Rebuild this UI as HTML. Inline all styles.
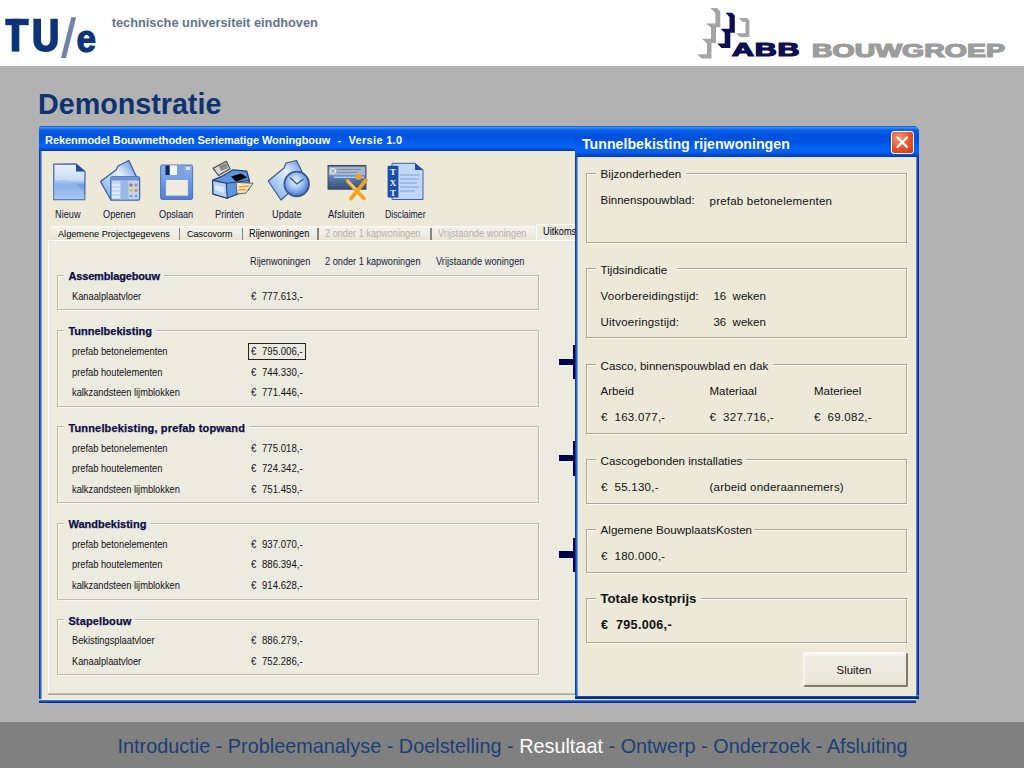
<!DOCTYPE html>
<html><head><meta charset="utf-8"><style>
html,body{margin:0;padding:0}
body{width:1024px;height:768px;position:relative;overflow:hidden;background:#b2b2b2;font-family:"Liberation Sans",sans-serif}
.t{position:absolute;white-space:nowrap;line-height:1}
.r{position:absolute}
</style></head><body>
<div class="r" style="left:0px;top:0px;width:1024px;height:66px;background:#fff"></div>
<div class="r" style="left:0px;top:722px;width:1024px;height:46px;background:#808080"></div>
<svg class="r" style="left:0;top:0" width="110" height="66" viewBox="0 0 110 66">
<g fill="#0b3479">
<rect x="5.3" y="18.8" width="23.4" height="6.4"/>
<rect x="11.7" y="18.8" width="7.6" height="32.8"/>
<path d="M33.4 18.8h7.6v20.5c0 4.5 2 6.3 4.7 6.3s4.7-1.8 4.7-6.3V18.8h7.4v21c0 8.5-5 12.2-12.1 12.2S33.4 48.3 33.4 39.8z"/>
</g>
<path d="M61 58 L66 58 L76.2 17.3 L71.2 17.3 Z" fill="#6f84a6"/>
<text x="0" y="0" font-family="Liberation Sans" font-weight="bold" font-size="39" fill="#0b3479" stroke="#0b3479" stroke-width="1.2" transform="translate(76.6 51.6) scale(0.9 1)">e</text>
</svg>
<div class="t" style="left:111.7px;top:16.60px;font-size:12.8px;font-weight:bold;color:#627490;">technische universiteit eindhoven</div>
<svg class="r" style="left:690px;top:0" width="80" height="66" viewBox="690 0 80 66">
<g fill="#a4a4a4">
<path d="M710.4 8.1 L717 8.1 L720.3 11.4 L720.3 27.2 L716 27.2 L716 42.9 L711.5 42.9 L711.5 58.5 L701.6 58.5 L697.2 54.2 L707 54.2 L707 43 L706.4 43 L702 38.8 L711 38.8 L711 27.6 L705.7 23.4 L715.4 23.4 L715.4 13.1 Z"/>
<path d="M738.8 18 L747 18 L749.4 20.4 L749.4 37 L740 37 L736.2 33.2 L745.5 33.2 L745.5 21.7 L742.5 21.7 Z"/>
</g>
<g fill="#0e0e52">
<path d="M725.4 12.8 L732 12.8 L734.8 15.6 L734.8 32.8 L730.3 32.8 L730.3 48 L721.5 48 L717.3 43.6 L724.7 43.6 L724.7 32.8 L720.6 28.8 L729.5 28.8 L729.5 16.9 Z"/>
</g>
</svg>
<div class="t" style="left:731.8px;top:41.40px;font-size:18.2px;font-weight:bold;color:#0e0e52;transform:scaleX(1.67);transform-origin:0 0;letter-spacing:0.5px;-webkit-text-stroke:1.2px #0e0e52;">ABB</div>
<div class="t" style="left:812px;top:42.40px;font-size:18.2px;font-weight:bold;color:#9c9c9c;transform:scaleX(1.565);transform-origin:0 0;-webkit-text-stroke:1.2px #9c9c9c;">BOUWGROEP</div>
<div class="t" style="left:38px;top:90.15px;font-size:28.7px;font-weight:bold;color:#0d3370;">Demonstratie</div>
<div class="t" style="left:117.5px;top:736.60px;font-size:19.8px;font-weight:normal;color:#1b3f74;letter-spacing:0.03px;">Introductie - Probleemanalyse - Doelstelling - <span style="color:#fff">Resultaat</span> - Ontwerp - Onderzoek - Afsluiting</div>
<div class="r" style="left:39px;top:126px;width:877px;height:577px;background:#1a3a9a;border-radius:3px 3px 0 0"></div>
<div class="r" style="left:39px;top:126px;width:877px;height:25px;background:linear-gradient(#1a4cb8 0px,#3a92ff 1.5px,#0a5ce6 4px,#0052dc 9px,#0056e2 13px,#0064f8 19px,#0a5ae8 22px,#0a3aa8 24.5px);border-radius:3px 3px 0 0"></div>
<div class="r" style="left:39px;top:151px;width:1px;height:552px;background:#1c3a96"></div>
<div class="r" style="left:40px;top:151px;width:1px;height:552px;background:#2a62c8"></div>
<div class="r" style="left:41px;top:151px;width:1px;height:552px;background:#6aa2e6"></div>
<div class="r" style="left:39px;top:699px;width:877px;height:1px;background:#e4eef8"></div>
<div class="r" style="left:39px;top:700px;width:877px;height:1px;background:#3a74d0"></div>
<div class="r" style="left:39px;top:701px;width:877px;height:1px;background:#1f48b0"></div>
<div class="r" style="left:39px;top:702px;width:877px;height:1px;background:#0c2a8a"></div>
<div class="r" style="left:42px;top:151px;width:874px;height:548px;background:#ece9d8"></div>
<div class="r" style="left:42px;top:151px;width:874px;height:1px;background:#e4ecf4"></div>
<div class="t" style="left:45.1px;top:135.00px;font-size:11px;font-weight:bold;color:#fff;letter-spacing:-0.07px;">Rekenmodel Bouwmethoden Seriematige Woningbouw</div>
<div class="t" style="left:348.6px;top:135.00px;font-size:11px;font-weight:bold;color:#fff;letter-spacing:0.3px;">Versie 1.0</div>
<div class="t" style="left:337.6px;top:135.00px;font-size:11px;font-weight:bold;color:#fff;">-</div>
<svg class="r" style="left:0;top:0" width="440" height="210" viewBox="0 0 440 210">
<defs>
<linearGradient id="gDoc" x1="0" y1="0" x2="0" y2="1"><stop offset="0" stop-color="#e8f0fc"/><stop offset="0.45" stop-color="#c9dcf7"/><stop offset="0.6" stop-color="#6e9be0"/><stop offset="1" stop-color="#bcd3f5"/></linearGradient>
<linearGradient id="gBlue" x1="0" y1="1" x2="1" y2="0"><stop offset="0" stop-color="#6e9ee6"/><stop offset="0.45" stop-color="#c4dcf8"/><stop offset="0.6" stop-color="#e4effc"/><stop offset="1" stop-color="#4f83d6"/></linearGradient>
<linearGradient id="gFlop" x1="0" y1="0" x2="0" y2="1"><stop offset="0" stop-color="#8fb4ee"/><stop offset="1" stop-color="#4d7fd3"/></linearGradient>
<radialGradient id="gClock" cx="0.45" cy="0.4" r="0.6"><stop offset="0" stop-color="#f2f7ff"/><stop offset="0.5" stop-color="#9fc1f2"/><stop offset="1" stop-color="#3f74cc"/></radialGradient>
<linearGradient id="gCard" x1="0" y1="0" x2="0" y2="1"><stop offset="0" stop-color="#5f708e"/><stop offset="0.35" stop-color="#8fa6c6"/><stop offset="0.5" stop-color="#5a7bb0"/><stop offset="1" stop-color="#3a4d70"/></linearGradient>
</defs>
<!-- Nieuw -->
<path d="M53.8 164.2 L76 163.8 L85 171.5 L84.8 199.6 L53.8 199.6 Z" fill="url(#gDoc)" stroke="#3f63a8" stroke-width="1.2"/>
<path d="M53.8 182 C66 176 79 182 84.8 196 L84.8 199.6 L53.8 199.6 Z" fill="#9fc0f0" opacity="0.6"/>
<path d="M76 163.8 L85 171.5 L76 171.5 Z" fill="#1f4b9c"/>
<!-- Openen -->
<path d="M100.5 181.5 L116 170 L118 166 L128.8 160.5 L137 178 L111 200.2 Z" fill="url(#gBlue)" stroke="#34589e" stroke-width="1.2" stroke-linejoin="round"/>
<rect x="110.8" y="176.8" width="28.8" height="23.4" rx="1.5" fill="#c0d8f6" stroke="#3c64ac" stroke-width="1.2"/>
<rect x="111.5" y="177.5" width="27.5" height="3" fill="#6a94d8"/>
<rect x="120.5" y="181" width="8" height="18.5" fill="#9ab8e6"/>
<path d="M112 185h8M112 189h8M112 193h8M112 197h8" stroke="#e8f2fc" stroke-width="1.6"/>
<circle cx="131" cy="185" r="1.7" fill="#d9604a"/><circle cx="136" cy="185" r="1.7" fill="#9aa078"/>
<circle cx="131" cy="190.5" r="1.7" fill="#e4b64a"/><circle cx="136" cy="190.5" r="1.7" fill="#d98a50"/>
<circle cx="131" cy="196" r="1.5" fill="#8aa0a0"/><circle cx="136" cy="196" r="1.5" fill="#8aa0a0"/>
<!-- Opslaan -->
<rect x="160.6" y="165" width="32" height="34.4" rx="1.5" fill="url(#gFlop)" stroke="#4a74c0" stroke-width="1"/>
<rect x="164.8" y="165" width="19.5" height="10.5" fill="#7aa0e0"/>
<rect x="165.5" y="165.5" width="4" height="9.5" fill="#0f2a5a"/>
<rect x="170" y="165.5" width="7" height="9.5" fill="#f4f6fb"/>
<rect x="186" y="167" width="4" height="3" fill="#dfe8f8"/>
<rect x="165.7" y="179.4" width="22.5" height="16.6" fill="#f1ece0" stroke="#6f93d4" stroke-width="0.8"/>
<!-- Printen -->
<path d="M213.1 168.2 L226.3 161.3 L230 168.7 L218.5 175.5 Z" fill="#d8d8d4" stroke="#444" stroke-width="1.1"/>
<path d="M219 166 L226 163 L228 168 L221 171 Z" fill="#8a8a88"/>
<path d="M212.6 180.4 L223.4 175.5 L233 169.8 L246.8 171.1 L249.3 180.4 L249 189.5 L227.3 198.2 L213.1 194 Z" fill="#5d95e0" stroke="#223c70" stroke-width="1.2" stroke-linejoin="round"/>
<path d="M212.6 180.4 L226.3 183.3 L227.3 198.2 L213.1 194 Z" fill="#b5d2f6" stroke="#223c70" stroke-width="1.1"/>
<path d="M215 185 L224 187 L224 193 L215 190 Z" fill="#e8f2ff" opacity="0.7"/>
<path d="M226.3 183.3 L249.3 180.4" stroke="#223c70" stroke-width="1"/>
<path d="M231 176.5 L241 173.5 L247.5 177.5 L236 181.5 Z" fill="#050505"/>
<path d="M236 182.3 L253.1 183.3 L245.8 193.1 L237 194 Z" fill="#f0e6d0" stroke="#555" stroke-width="0.9"/>
<path d="M239 187 L249 186 M238.5 190 L246 189.5" stroke="#e8a030" stroke-width="1.6"/>
<!-- Update -->
<path d="M268.2 181 L284 168 L286 163 L296.5 160.5 L305 178 L281 200 Z" fill="url(#gBlue)" stroke="#34589e" stroke-width="1.2" stroke-linejoin="round"/>
<circle cx="296.7" cy="184" r="12.3" fill="url(#gClock)" stroke="#3a5690" stroke-width="1.8"/>
<path d="M290.5 178 L296.7 184 L303 179.5" fill="none" stroke="#2f4f85" stroke-width="1.3" stroke-linecap="round"/>
<!-- Afsluiten -->
<rect x="328" y="165.4" width="38" height="23.8" fill="url(#gCard)" stroke="#34425e" stroke-width="0.9"/>
<rect x="329" y="167" width="36" height="8" fill="#aebdd2" opacity="0.85"/>
<circle cx="333" cy="171" r="2.6" fill="none" stroke="#f4f6fa" stroke-width="1"/>
<path d="M337 169.5h24M337 172.5h20" stroke="#7f8ea8" stroke-width="1"/>
<rect x="334" y="176.5" width="30" height="1.6" fill="#a8ccf4"/>
<path d="M347.5 181 L364 198.5 M366 180 L351 198.5" stroke="#f2a31c" stroke-width="3.6" stroke-linecap="round"/>
<path d="M348 181 L356 189" stroke="#f8d890" stroke-width="1.4" stroke-linecap="round"/>
<circle cx="358.5" cy="177" r="3" fill="#f0a020"/>
<!-- Disclaimer -->
<path d="M392 163.3 L415 163.3 L423 170 L423 199.5 L392 199.5 Z" fill="#c2d7f5" stroke="#3a62ad" stroke-width="1"/>
<path d="M415 163.3 L423 170 L415 170 Z" fill="#1f4b9c"/>
<g stroke="#7ea3dc" stroke-width="1.1"><path d="M400 175h19M400 179h19M400 183h17M400 187h19M400 191h15"/></g>
<rect x="387.6" y="165.8" width="10.8" height="31.6" rx="1" fill="#1d4ea6"/>
<g fill="#eaf1ff" font-family="Liberation Serif" font-weight="bold" font-size="9" text-anchor="middle">
<text x="393" y="175">T</text><text x="393" y="185.5">X</text><text x="393" y="196">T</text></g>
</svg>
<div class="t" style="left:54.6px;top:209.99px;font-size:10.03px;font-weight:normal;color:#14143a;transform:scaleX(0.9174);transform-origin:0 0;">Nieuw</div>
<div class="t" style="left:103px;top:209.99px;font-size:10.03px;font-weight:normal;color:#14143a;transform:scaleX(0.9174);transform-origin:0 0;">Openen</div>
<div class="t" style="left:159px;top:209.99px;font-size:10.03px;font-weight:normal;color:#14143a;transform:scaleX(0.9174);transform-origin:0 0;">Opslaan</div>
<div class="t" style="left:214.5px;top:209.99px;font-size:10.03px;font-weight:normal;color:#14143a;transform:scaleX(0.9174);transform-origin:0 0;">Printen</div>
<div class="t" style="left:271.5px;top:209.99px;font-size:10.03px;font-weight:normal;color:#14143a;transform:scaleX(0.9174);transform-origin:0 0;">Update</div>
<div class="t" style="left:327.7px;top:209.82px;font-size:10.36px;font-weight:normal;color:#14143a;transform:scaleX(0.9174);transform-origin:0 0;">Afsluiten</div>
<div class="t" style="left:385px;top:209.99px;font-size:10.03px;font-weight:normal;color:#14143a;transform:scaleX(0.868);transform-origin:0 0;">Disclaimer</div>
<div class="r" style="left:51px;top:226px;width:484px;height:14px;background:linear-gradient(#fdfdfb 0px,#f3f2ea 1.5px,#eeede2 8px,#e6e4d6 14px)"></div>
<div class="r" style="left:178.7px;top:228px;width:1.5px;height:12px;background:#85837a"></div>
<div class="r" style="left:241.5px;top:228px;width:1.5px;height:12px;background:#85837a"></div>
<div class="r" style="left:317.2px;top:228px;width:1.5px;height:12px;background:#85837a"></div>
<div class="r" style="left:430.2px;top:228px;width:1.5px;height:12px;background:#85837a"></div>
<div class="t" style="left:58px;top:229.01px;font-size:9.98px;font-weight:normal;color:#000;transform:scaleX(0.9174);transform-origin:0 0;">Algemene Projectgegevens</div>
<div class="t" style="left:186.9px;top:229.09px;font-size:9.81px;font-weight:normal;color:#000;transform:scaleX(0.9174);transform-origin:0 0;">Cascovorm</div>
<div class="t" style="left:248.7px;top:228.99px;font-size:10.03px;font-weight:normal;color:#000;transform:scaleX(0.9174);transform-origin:0 0;">Rijenwoningen</div>
<div class="t" style="left:325.4px;top:229.00px;font-size:10.01px;font-weight:normal;color:#b5b2a5;transform:scaleX(0.9174);transform-origin:0 0;">2 onder 1 kapwoningen</div>
<div class="t" style="left:438.4px;top:228.93px;font-size:10.14px;font-weight:normal;color:#b5b2a5;transform:scaleX(0.9174);transform-origin:0 0;">Vrijstaande woningen</div>
<div class="r" style="left:536px;top:224px;width:39px;height:17px;background:#ecebe2;border-top:1px solid #fdfdf8;border-left:1px solid #fdfdf8;box-sizing:border-box"></div>
<div class="t" style="left:543.4px;top:226.99px;font-size:10.03px;font-weight:normal;color:#000;transform:scaleX(0.9174);transform-origin:0 0;">Uitkomst</div>
<div class="r" style="left:48px;top:240px;width:527px;height:455px;background:#ecebe0;border-left:1px solid #fff;border-top:1px solid #fff"></div>
<div class="r" style="left:48px;top:693px;width:527px;height:2px;background:linear-gradient(#e8c9bf,#8d9a7c)"></div>
<div class="t" style="left:249.6px;top:256.99px;font-size:10.03px;font-weight:normal;color:#1a1a3a;transform:scaleX(0.9174);transform-origin:0 0;">Rijenwoningen</div>
<div class="t" style="left:325px;top:256.99px;font-size:10.03px;font-weight:normal;color:#1a1a3a;transform:scaleX(0.9174);transform-origin:0 0;">2 onder 1 kapwoningen</div>
<div class="t" style="left:435.6px;top:256.93px;font-size:10.14px;font-weight:normal;color:#1a1a3a;transform:scaleX(0.9174);transform-origin:0 0;">Vrijstaande woningen</div>
<div class="r" style="left:57px;top:275px;width:482px;height:35px;border:1px solid #bdbaac;box-shadow:1px 1px 0 #f8f7f0, inset 1px 1px 0 #f8f7f0;box-sizing:border-box"></div>
<div class="r" style="left:64.4px;top:271.6px;width:99.6px;height:8px;background:#ecebe0"></div>
<div class="t" style="left:68.4px;top:271.00px;font-size:11px;font-weight:bold;color:#0c0c46;letter-spacing:-0.148px;-webkit-text-stroke:0.25px #0c0c46;">Assemblagebouw</div>
<div class="t" style="left:71.9px;top:291.93px;font-size:10.14px;font-weight:normal;color:#111;transform:scaleX(0.9174);transform-origin:0 0;">Kanaalplaatvloer</div>
<div class="t" style="left:251.3px;top:291.77px;font-size:10.46px;font-weight:normal;color:#111;transform:scaleX(0.9174);transform-origin:0 0;">€</div>
<div class="t" style="left:262px;top:291.77px;font-size:10.46px;font-weight:normal;color:#111;letter-spacing:0.022px;transform:scaleX(0.9174);transform-origin:0 0;">777.613,-</div>
<div class="r" style="left:57px;top:330px;width:482px;height:77px;border:1px solid #bdbaac;box-shadow:1px 1px 0 #f8f7f0, inset 1px 1px 0 #f8f7f0;box-sizing:border-box"></div>
<div class="r" style="left:64.4px;top:326.4px;width:91.5px;height:8px;background:#ecebe0"></div>
<div class="t" style="left:68.4px;top:326.00px;font-size:11px;font-weight:bold;color:#0c0c46;letter-spacing:-0.002px;-webkit-text-stroke:0.25px #0c0c46;">Tunnelbekisting</div>
<div class="t" style="left:71.9px;top:346.93px;font-size:10.14px;font-weight:normal;color:#111;transform:scaleX(0.9174);transform-origin:0 0;">prefab betonelementen</div>
<div class="t" style="left:251.3px;top:346.77px;font-size:10.46px;font-weight:normal;color:#111;transform:scaleX(0.9174);transform-origin:0 0;">€</div>
<div class="t" style="left:262px;top:346.77px;font-size:10.46px;font-weight:normal;color:#111;letter-spacing:0.022px;transform:scaleX(0.9174);transform-origin:0 0;">795.006,-</div>
<div class="t" style="left:71.9px;top:367.93px;font-size:10.14px;font-weight:normal;color:#111;transform:scaleX(0.9174);transform-origin:0 0;">prefab houtelementen</div>
<div class="t" style="left:251.3px;top:367.77px;font-size:10.46px;font-weight:normal;color:#111;transform:scaleX(0.9174);transform-origin:0 0;">€</div>
<div class="t" style="left:262px;top:367.77px;font-size:10.46px;font-weight:normal;color:#111;letter-spacing:0.022px;transform:scaleX(0.9174);transform-origin:0 0;">744.330,-</div>
<div class="t" style="left:71.9px;top:387.93px;font-size:10.14px;font-weight:normal;color:#111;transform:scaleX(0.9174);transform-origin:0 0;">kalkzandsteen lijmblokken</div>
<div class="t" style="left:251.3px;top:387.77px;font-size:10.46px;font-weight:normal;color:#111;transform:scaleX(0.9174);transform-origin:0 0;">€</div>
<div class="t" style="left:262px;top:387.77px;font-size:10.46px;font-weight:normal;color:#111;letter-spacing:0.022px;transform:scaleX(0.9174);transform-origin:0 0;">771.446,-</div>
<div class="r" style="left:57px;top:426px;width:482px;height:77px;border:1px solid #bdbaac;box-shadow:1px 1px 0 #f8f7f0, inset 1px 1px 0 #f8f7f0;box-sizing:border-box"></div>
<div class="r" style="left:64.4px;top:422.6px;width:184.5px;height:8px;background:#ecebe0"></div>
<div class="t" style="left:68.4px;top:423.00px;font-size:11px;font-weight:bold;color:#0c0c46;letter-spacing:0.166px;-webkit-text-stroke:0.25px #0c0c46;">Tunnelbekisting, prefab topwand</div>
<div class="t" style="left:71.9px;top:443.93px;font-size:10.14px;font-weight:normal;color:#111;transform:scaleX(0.9174);transform-origin:0 0;">prefab betonelementen</div>
<div class="t" style="left:251.3px;top:443.77px;font-size:10.46px;font-weight:normal;color:#111;transform:scaleX(0.9174);transform-origin:0 0;">€</div>
<div class="t" style="left:262px;top:443.77px;font-size:10.46px;font-weight:normal;color:#111;letter-spacing:0.022px;transform:scaleX(0.9174);transform-origin:0 0;">775.018,-</div>
<div class="t" style="left:71.9px;top:463.93px;font-size:10.14px;font-weight:normal;color:#111;transform:scaleX(0.9174);transform-origin:0 0;">prefab houtelementen</div>
<div class="t" style="left:251.3px;top:463.77px;font-size:10.46px;font-weight:normal;color:#111;transform:scaleX(0.9174);transform-origin:0 0;">€</div>
<div class="t" style="left:262px;top:463.77px;font-size:10.46px;font-weight:normal;color:#111;letter-spacing:0.022px;transform:scaleX(0.9174);transform-origin:0 0;">724.342,-</div>
<div class="t" style="left:71.9px;top:484.93px;font-size:10.14px;font-weight:normal;color:#111;transform:scaleX(0.9174);transform-origin:0 0;">kalkzandsteen lijmblokken</div>
<div class="t" style="left:251.3px;top:484.77px;font-size:10.46px;font-weight:normal;color:#111;transform:scaleX(0.9174);transform-origin:0 0;">€</div>
<div class="t" style="left:262px;top:484.77px;font-size:10.46px;font-weight:normal;color:#111;letter-spacing:0.022px;transform:scaleX(0.9174);transform-origin:0 0;">751.459,-</div>
<div class="r" style="left:57px;top:523px;width:482px;height:77px;border:1px solid #bdbaac;box-shadow:1px 1px 0 #f8f7f0, inset 1px 1px 0 #f8f7f0;box-sizing:border-box"></div>
<div class="r" style="left:64.4px;top:519.1px;width:86px;height:8px;background:#ecebe0"></div>
<div class="t" style="left:68.4px;top:519.00px;font-size:11px;font-weight:bold;color:#0c0c46;letter-spacing:0.016px;-webkit-text-stroke:0.25px #0c0c46;">Wandbekisting</div>
<div class="t" style="left:71.9px;top:539.93px;font-size:10.14px;font-weight:normal;color:#111;transform:scaleX(0.9174);transform-origin:0 0;">prefab betonelementen</div>
<div class="t" style="left:251.3px;top:539.77px;font-size:10.46px;font-weight:normal;color:#111;transform:scaleX(0.9174);transform-origin:0 0;">€</div>
<div class="t" style="left:262px;top:539.77px;font-size:10.46px;font-weight:normal;color:#111;letter-spacing:0.022px;transform:scaleX(0.9174);transform-origin:0 0;">937.070,-</div>
<div class="t" style="left:71.9px;top:559.93px;font-size:10.14px;font-weight:normal;color:#111;transform:scaleX(0.9174);transform-origin:0 0;">prefab houtelementen</div>
<div class="t" style="left:251.3px;top:559.77px;font-size:10.46px;font-weight:normal;color:#111;transform:scaleX(0.9174);transform-origin:0 0;">€</div>
<div class="t" style="left:262px;top:559.77px;font-size:10.46px;font-weight:normal;color:#111;letter-spacing:0.022px;transform:scaleX(0.9174);transform-origin:0 0;">886.394,-</div>
<div class="t" style="left:71.9px;top:580.93px;font-size:10.14px;font-weight:normal;color:#111;transform:scaleX(0.9174);transform-origin:0 0;">kalkzandsteen lijmblokken</div>
<div class="t" style="left:251.3px;top:580.77px;font-size:10.46px;font-weight:normal;color:#111;transform:scaleX(0.9174);transform-origin:0 0;">€</div>
<div class="t" style="left:262px;top:580.77px;font-size:10.46px;font-weight:normal;color:#111;letter-spacing:0.022px;transform:scaleX(0.9174);transform-origin:0 0;">914.628,-</div>
<div class="r" style="left:57px;top:619px;width:482px;height:56px;border:1px solid #bdbaac;box-shadow:1px 1px 0 #f8f7f0, inset 1px 1px 0 #f8f7f0;box-sizing:border-box"></div>
<div class="r" style="left:64.4px;top:615.2px;width:71px;height:8px;background:#ecebe0"></div>
<div class="t" style="left:68.4px;top:616.00px;font-size:11px;font-weight:bold;color:#0c0c46;letter-spacing:0.142px;-webkit-text-stroke:0.25px #0c0c46;">Stapelbouw</div>
<div class="t" style="left:71.9px;top:635.93px;font-size:10.14px;font-weight:normal;color:#111;transform:scaleX(0.9174);transform-origin:0 0;">Bekistingsplaatvloer</div>
<div class="t" style="left:251.3px;top:635.77px;font-size:10.46px;font-weight:normal;color:#111;transform:scaleX(0.9174);transform-origin:0 0;">€</div>
<div class="t" style="left:262px;top:635.77px;font-size:10.46px;font-weight:normal;color:#111;letter-spacing:0.022px;transform:scaleX(0.9174);transform-origin:0 0;">886.279,-</div>
<div class="t" style="left:71.9px;top:656.93px;font-size:10.14px;font-weight:normal;color:#111;transform:scaleX(0.9174);transform-origin:0 0;">Kanaalplaatvloer</div>
<div class="t" style="left:251.3px;top:656.77px;font-size:10.46px;font-weight:normal;color:#111;transform:scaleX(0.9174);transform-origin:0 0;">€</div>
<div class="t" style="left:262px;top:656.77px;font-size:10.46px;font-weight:normal;color:#111;letter-spacing:0.022px;transform:scaleX(0.9174);transform-origin:0 0;">752.286,-</div>
<div class="r" style="left:248.2px;top:343.4px;width:57.5px;height:16.4px;border:1.3px solid #222;box-sizing:border-box"></div>
<div class="r" style="left:559.4px;top:358.8px;width:14.5px;height:6.2px;background:#00004a"></div>
<div class="r" style="left:573px;top:344.8px;width:2.6px;height:34.2px;background:#00004a"></div>
<div class="r" style="left:559.4px;top:455.2px;width:14.5px;height:6.2px;background:#00004a"></div>
<div class="r" style="left:573px;top:441.4px;width:2.6px;height:34.2px;background:#00004a"></div>
<div class="r" style="left:559.4px;top:551.4px;width:14.5px;height:6.2px;background:#00004a"></div>
<div class="r" style="left:573px;top:537.6px;width:2.6px;height:34.2px;background:#00004a"></div>
<div class="r" style="left:575px;top:126px;width:344px;height:572.5px;background:#1a3a9a;border-radius:0 6px 0 0"></div>
<div class="r" style="left:575px;top:126px;width:344px;height:31px;background:linear-gradient(#1a4cb8 0px,#3090ff 1.5px,#0a60e8 4px,#0050dc 10px,#0054e0 16px,#0064fa 23px,#0a5ae8 27px,#0a3aa8 30.5px);border-radius:0 6px 0 0"></div>
<div class="r" style="left:575px;top:157px;width:1px;height:541.5px;background:#1c3a96"></div>
<div class="r" style="left:576px;top:157px;width:1px;height:541.5px;background:#2a62c8"></div>
<div class="r" style="left:577px;top:157px;width:1px;height:541.5px;background:#6aa2e6"></div>
<div class="r" style="left:916px;top:157px;width:1px;height:541.5px;background:#4a86d8"></div>
<div class="r" style="left:917px;top:157px;width:1px;height:541.5px;background:#1f48b0"></div>
<div class="r" style="left:918px;top:157px;width:1px;height:541.5px;background:#0c2a8a"></div>
<div class="r" style="left:575px;top:695.0px;width:344px;height:1px;background:#4a86d8"></div>
<div class="r" style="left:575px;top:696.0px;width:344px;height:1px;background:#1f48b0"></div>
<div class="r" style="left:575px;top:697.0px;width:344px;height:1.5px;background:#0c2a8a"></div>
<div class="r" style="left:578px;top:157px;width:338px;height:538.5px;background:#ece9d8"></div>
<div class="r" style="left:578px;top:157px;width:338px;height:1px;background:#dce6f6"></div>
<div class="t" style="left:582px;top:137.40px;font-size:14.2px;font-weight:bold;color:#fff;">Tunnelbekisting rijenwoningen</div>
<div class="r" style="left:891px;top:131px;width:22.5px;height:23px;box-sizing:border-box;border:1px solid #fff;border-radius:3px;background:radial-gradient(circle at 35% 30%,#f59a7a,#e0532b 55%,#c73a14)"></div>
<svg class="r" style="left:891px;top:131px" width="23" height="23"><path d="M6.5 6.5L16 16M16 6.5L6.5 16" stroke="#fff" stroke-width="2.2" stroke-linecap="round"/></svg>
<div class="r" style="left:586px;top:173px;width:321px;height:70px;border:1px solid #a8a698;box-shadow:1px 1px 0 #fbfaf4, inset 1px 1px 0 #fbfaf4;box-sizing:border-box"></div>
<div class="r" style="left:596px;top:168.3px;width:89.7px;height:10px;background:#ece9d8"></div>
<div class="t" style="left:600.6px;top:167.70px;font-size:11.6px;font-weight:normal;color:#111;">Bijzonderheden</div>
<div class="t" style="left:600.6px;top:194.75px;font-size:11.5px;font-weight:normal;color:#111;">Binnenspouwblad:</div>
<div class="t" style="left:709.6px;top:195.75px;font-size:11.5px;font-weight:normal;color:#111;letter-spacing:0.2px;">prefab betonelementen</div>
<div class="r" style="left:586px;top:268px;width:321px;height:70px;border:1px solid #a8a698;box-shadow:1px 1px 0 #fbfaf4, inset 1px 1px 0 #fbfaf4;box-sizing:border-box"></div>
<div class="r" style="left:596px;top:263.8px;width:81px;height:10px;background:#ece9d8"></div>
<div class="t" style="left:600.6px;top:263.70px;font-size:11.6px;font-weight:normal;color:#111;">Tijdsindicatie</div>
<div class="t" style="left:600.6px;top:290.75px;font-size:11.5px;font-weight:normal;color:#111;letter-spacing:0.2px;">Voorbereidingstijd:</div>
<div class="t" style="left:713.4px;top:290.75px;font-size:11.5px;font-weight:normal;color:#111;">16 &nbsp;weken</div>
<div class="t" style="left:600.6px;top:316.75px;font-size:11.5px;font-weight:normal;color:#111;letter-spacing:0.2px;">Uitvoeringstijd:</div>
<div class="t" style="left:713.4px;top:316.75px;font-size:11.5px;font-weight:normal;color:#111;">36 &nbsp;weken</div>
<div class="r" style="left:586px;top:364px;width:321px;height:70px;border:1px solid #a8a698;box-shadow:1px 1px 0 #fbfaf4, inset 1px 1px 0 #fbfaf4;box-sizing:border-box"></div>
<div class="r" style="left:596px;top:359.1px;width:176.7px;height:10px;background:#ece9d8"></div>
<div class="t" style="left:600.6px;top:359.70px;font-size:11.6px;font-weight:normal;color:#111;">Casco, binnenspouwblad en dak</div>
<div class="t" style="left:600.6px;top:385.75px;font-size:11.5px;font-weight:normal;color:#111;">Arbeid</div>
<div class="t" style="left:709.5px;top:385.75px;font-size:11.5px;font-weight:normal;color:#111;">Materiaal</div>
<div class="t" style="left:814px;top:385.75px;font-size:11.5px;font-weight:normal;color:#111;">Materieel</div>
<div class="t" style="left:600.9px;top:411.75px;font-size:11.5px;font-weight:normal;color:#111;">€</div>
<div class="t" style="left:614.5px;top:411.75px;font-size:11.5px;font-weight:normal;color:#111;letter-spacing:0.26px;">163.077,-</div>
<div class="t" style="left:709.5px;top:411.75px;font-size:11.5px;font-weight:normal;color:#111;">€</div>
<div class="t" style="left:723.1px;top:411.75px;font-size:11.5px;font-weight:normal;color:#111;letter-spacing:0.26px;">327.716,-</div>
<div class="t" style="left:814px;top:411.75px;font-size:11.5px;font-weight:normal;color:#111;">€</div>
<div class="t" style="left:827.6px;top:411.75px;font-size:11.5px;font-weight:normal;color:#111;letter-spacing:0.26px;">69.082,-</div>
<div class="r" style="left:586px;top:459px;width:321px;height:45px;border:1px solid #a8a698;box-shadow:1px 1px 0 #fbfaf4, inset 1px 1px 0 #fbfaf4;box-sizing:border-box"></div>
<div class="r" style="left:596px;top:454.4px;width:150px;height:10px;background:#ece9d8"></div>
<div class="t" style="left:600.6px;top:454.70px;font-size:11.6px;font-weight:normal;color:#111;">Cascogebonden installaties</div>
<div class="t" style="left:600.9px;top:481.75px;font-size:11.5px;font-weight:normal;color:#111;">€</div>
<div class="t" style="left:614.5px;top:481.75px;font-size:11.5px;font-weight:normal;color:#111;letter-spacing:0.26px;">55.130,-</div>
<div class="t" style="left:709.5px;top:481.75px;font-size:11.5px;font-weight:normal;color:#111;letter-spacing:0.2px;">(arbeid onderaannemers)</div>
<div class="r" style="left:586px;top:529px;width:321px;height:44px;border:1px solid #a8a698;box-shadow:1px 1px 0 #fbfaf4, inset 1px 1px 0 #fbfaf4;box-sizing:border-box"></div>
<div class="r" style="left:596px;top:524.2px;width:158.4px;height:10px;background:#ece9d8"></div>
<div class="t" style="left:600.6px;top:523.70px;font-size:11.6px;font-weight:normal;color:#111;">Algemene BouwplaatsKosten</div>
<div class="t" style="left:600.9px;top:550.75px;font-size:11.5px;font-weight:normal;color:#111;">€</div>
<div class="t" style="left:614.5px;top:550.75px;font-size:11.5px;font-weight:normal;color:#111;letter-spacing:0.26px;">180.000,-</div>
<div class="r" style="left:586px;top:598px;width:321px;height:45px;border:1px solid #a8a698;box-shadow:1px 1px 0 #fbfaf4, inset 1px 1px 0 #fbfaf4;box-sizing:border-box"></div>
<div class="r" style="left:596px;top:593.1px;width:105.3px;height:10px;background:#ece9d8"></div>
<div class="t" style="left:600.6px;top:592.45px;font-size:13.1px;font-weight:bold;color:#111;">Totale kostprijs</div>
<div class="t" style="left:600.9px;top:619.20px;font-size:12.6px;font-weight:bold;color:#111;">€</div>
<div class="t" style="left:616px;top:619.20px;font-size:12.6px;font-weight:bold;color:#111;letter-spacing:0.3px;">795.006,-</div>
<div class="r" style="left:803.4px;top:652px;width:104.3px;height:34.5px;box-sizing:border-box;border-radius:2px;background:linear-gradient(#fbfaf4 0px,#eeece0 3px,#ebe9dc 85%,#e2dfd0 100%);border-right:2px solid #7d7a6a;border-bottom:2px solid #7d7a6a;border-top:2px solid #fbfbf6;border-left:2px solid #f6f5ee"></div>
<div class="t" style="left:836.6px;top:664.80px;font-size:11.4px;font-weight:normal;color:#111;">Sluiten</div>
</body></html>
